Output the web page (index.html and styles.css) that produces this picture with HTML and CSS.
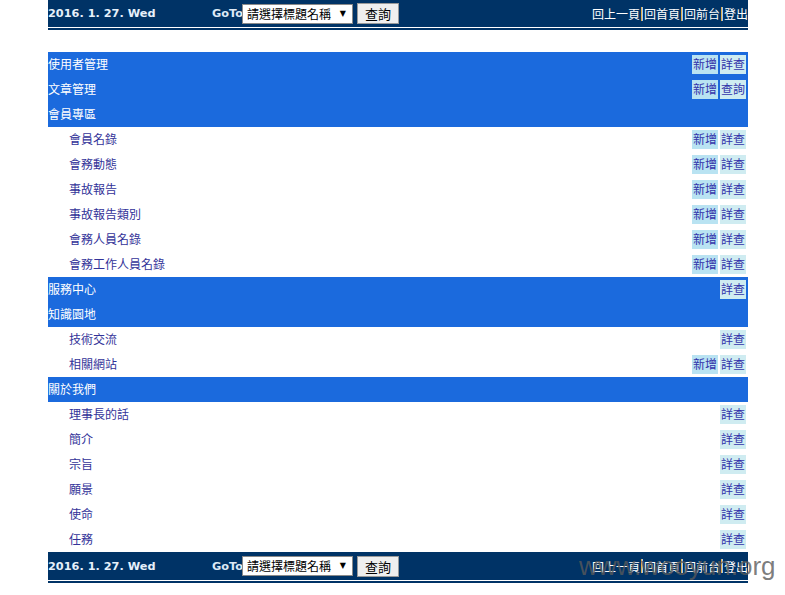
FILE: index.html
```html
<!DOCTYPE html>
<html lang="zh-Hant">
<head>
<meta charset="utf-8">
<title>後台管理</title>
<link rel="stylesheet" href="styles.css">
</head>
<body>
<div class="page">
  <div class="topbar">
    <div class="date">2016. 1. 27. Wed</div>
    <div class="goto">
      <span class="goto-label">GoTo</span>
      <div class="select"><span>請選擇標題名稱</span><span class="arrow">▼</span></div>
      <div class="btn">查詢</div>
    </div>
    <div class="links">
      <span>回上一頁</span><i class="sep"></i><span>回首頁</span><i class="sep"></i><span>回前台</span><i class="sep"></i><span>登出</span>
    </div>
  </div>
  <div class="rule"></div>

  <div class="menu">
    <div class="row main"><span class="label">使用者管理</span><span class="acts"><b class="add">新增</b><b class="view">詳查</b></span></div>
    <div class="row main"><span class="label">文章管理</span><span class="acts"><b class="add">新增</b><b class="view">查詢</b></span></div>
    <div class="row main"><span class="label">會員專區</span></div>
    <div class="row sub"><span class="label">會員名錄</span><span class="acts"><b class="add">新增</b><b class="view">詳查</b></span></div>
    <div class="row sub"><span class="label">會務動態</span><span class="acts"><b class="add">新增</b><b class="view">詳查</b></span></div>
    <div class="row sub"><span class="label">事故報告</span><span class="acts"><b class="add">新增</b><b class="view">詳查</b></span></div>
    <div class="row sub"><span class="label">事故報告類別</span><span class="acts"><b class="add">新增</b><b class="view">詳查</b></span></div>
    <div class="row sub"><span class="label">會務人員名錄</span><span class="acts"><b class="add">新增</b><b class="view">詳查</b></span></div>
    <div class="row sub"><span class="label">會務工作人員名錄</span><span class="acts"><b class="add">新增</b><b class="view">詳查</b></span></div>
    <div class="row main"><span class="label">服務中心</span><span class="acts"><b class="view">詳查</b></span></div>
    <div class="row main"><span class="label">知識園地</span></div>
    <div class="row sub"><span class="label">技術交流</span><span class="acts"><b class="view">詳查</b></span></div>
    <div class="row sub"><span class="label">相關網站</span><span class="acts"><b class="add">新增</b><b class="view">詳查</b></span></div>
    <div class="row main"><span class="label">關於我們</span></div>
    <div class="row sub"><span class="label">理事長的話</span><span class="acts"><b class="view">詳查</b></span></div>
    <div class="row sub"><span class="label">簡介</span><span class="acts"><b class="view">詳查</b></span></div>
    <div class="row sub"><span class="label">宗旨</span><span class="acts"><b class="view">詳查</b></span></div>
    <div class="row sub"><span class="label">願景</span><span class="acts"><b class="view">詳查</b></span></div>
    <div class="row sub"><span class="label">使命</span><span class="acts"><b class="view">詳查</b></span></div>
    <div class="row sub"><span class="label">任務</span><span class="acts"><b class="view">詳查</b></span></div>
  </div>

  <div class="topbar bottom">
    <div class="date">2016. 1. 27. Wed</div>
    <div class="goto">
      <span class="goto-label">GoTo</span>
      <div class="select"><span>請選擇標題名稱</span><span class="arrow">▼</span></div>
      <div class="btn">查詢</div>
    </div>
    <div class="links">
      <span>回上一頁</span><i class="sep"></i><span>回首頁</span><i class="sep"></i><span>回前台</span><i class="sep"></i><span>登出</span>
    </div>
  </div>
  <div class="rule"></div>
</div>
<div class="watermark">www.wooyun.org</div>
</body>
</html>
```

FILE: styles.css
```css
html, body {
  margin: 0;
  padding: 0;
  background: #ffffff;
}
body {
  font-family: "Noto Sans CJK TC", "Noto Sans CJK SC", sans-serif;
  font-size: 12px;
  position: relative;
  min-height: 595px;
}
.page {
  width: 700px;
  margin-left: 48px;
}
.topbar {
  height: 27px;
  background: #003366;
  display: flex;
  align-items: center;
  color: #ffffff;
}
.topbar.bottom {
  height: 28px;
}
.date {
  font-family: "DejaVu Sans", Verdana, sans-serif;
  font-weight: bold;
  font-size: 11.3px;
  color: #e6f0fa;
  width: 164px;
  white-space: nowrap;
}
.goto {
  display: flex;
  align-items: center;
}
.goto-label {
  font-family: "DejaVu Sans", Verdana, sans-serif;
  font-weight: bold;
  font-size: 11.3px;
  color: #dde8f5;
  width: 30px;
  white-space: nowrap;
}
.select {
  box-sizing: border-box;
  width: 111px;
  height: 20px;
  background: #ffffff;
  border: 1px solid #8a8a8a;
  color: #000000;
  font-size: 12px;
  line-height: 18px;
  display: flex;
  justify-content: space-between;
  padding: 0 6px 0 4px;
  white-space: nowrap;
}
.select .arrow {
  font-size: 8px;
  font-family: "DejaVu Sans", sans-serif;
}
.btn {
  box-sizing: border-box;
  margin-left: 4px;
  width: 42px;
  height: 21px;
  background: #efefef;
  border: 1px solid #9a9a9a;
  color: #000000;
  font-size: 13px;
  line-height: 19px;
  text-align: center;
}
.links {
  margin-left: auto;
  display: flex;
  align-items: center;
  font-size: 12px;
  color: #ffffff;
  white-space: nowrap;
}
.sep {
  display: inline-block;
  width: 2px;
  height: 14px;
  margin: 0 1px;
  background: linear-gradient(to right, #e0b050 50%, #a8c8f0 50%);
}
.rule {
  height: 2px;
  margin-top: 1px;
  background: #003366;
}
.menu {
  margin-top: 22px;
}
.row {
  height: 25px;
  display: flex;
  align-items: center;
  justify-content: space-between;
}
.row .label {
  margin-top: -2px;
}
.row.main {
  background: #1b6add;
  color: #ffffff;
}
.row.sub {
  color: #333399;
}
.row.sub .label {
  padding-left: 21px;
}
.acts {
  display: flex;
  gap: 2px;
  padding-right: 2px;
}
.acts b {
  font-weight: normal;
  width: 26px;
  height: 19px;
  line-height: 18px;
  text-align: center;
  color: #3333aa;
  font-size: 12px;
}
.acts .add {
  background: #b9e3f2;
}
.acts .view {
  background: #cfecf1;
}
.watermark {
  position: absolute;
  left: 579px;
  top: 551px;
  font-family: "Liberation Sans", Arial, sans-serif;
  font-size: 26px;
  color: rgba(90, 90, 90, 0.8);
  white-space: nowrap;
}
```
